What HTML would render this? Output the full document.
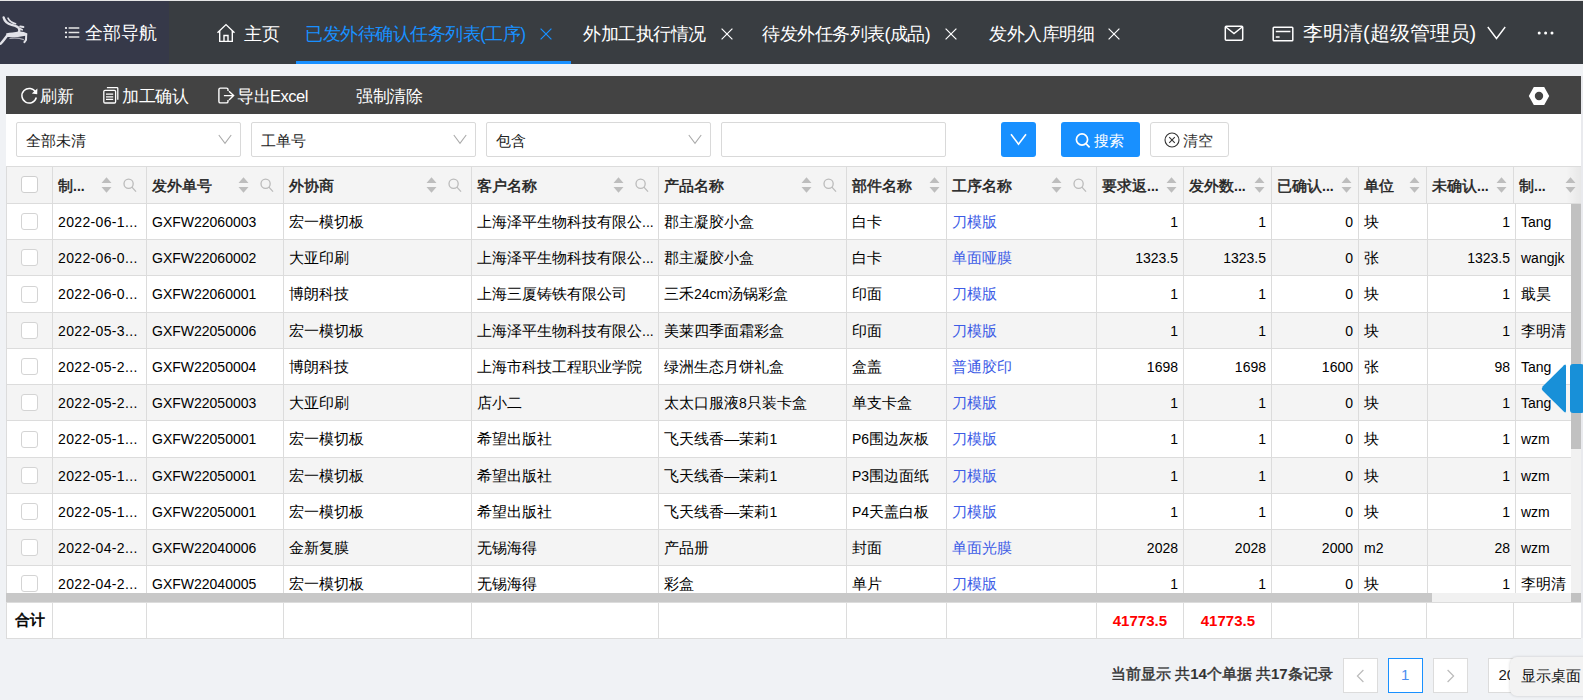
<!DOCTYPE html>
<html><head><meta charset="utf-8">
<style>
*{margin:0;padding:0;box-sizing:border-box}
html,body{width:1583px;height:700px;overflow:hidden;background:#f0f2f5;font-family:"Liberation Sans",sans-serif;color:#222}
.ab{position:absolute}
.t{position:absolute;white-space:nowrap}
.hd{-webkit-text-stroke-width:0.45px}
.hd{font-weight:normal}
</style></head><body>

<div class="ab" style="left:0;top:0;width:1583px;height:1px;background:#e6e6e6"></div>
<div class="ab" style="left:0;top:1px;width:1583px;height:63px;background:#393d41"></div>
<div class="ab" style="left:0;top:1px;width:169px;height:63px;background:#363949"></div>
<svg class="ab" style="left:0;top:12px" width="30" height="36" viewBox="0 0 30 36">
<g fill="none" stroke="#e2e2e8" stroke-linecap="round" stroke-linejoin="round">
<path d="M3.6 5.4 C4.4 8.6 6.6 11.6 11.6 12.8 C15 13.6 17.6 14 18.8 16.2 C19.6 17.8 19.4 19.4 18.6 20.4" stroke-width="2.3"/>
<path d="M8 6.2 C9.2 8.8 11.4 10.8 15.6 11.8" stroke-width="1.6"/>
<path d="M20.2 14.4 L23.4 15" stroke-width="2"/>
<path d="M19.6 16.6 L22.2 17.8" stroke-width="1.6"/>
<path d="M26.2 22.8 L26 28 L24.4 30.2" stroke-width="2"/>
<path d="M7.6 23 C5.4 26 3.2 29 0.6 31.8" stroke-width="2.4"/>
<path d="M10 26.4 C14.4 25.8 19.4 26 23.6 27.6" stroke-width="1.4" stroke="#a8a8b2"/>
</g>
<path d="M6 21.4 C10 20.8 15 20.2 19 19.6 C22 19.4 25 20.4 27.4 21.6 L27 23.6 C24 24 21 24.6 18 25 C14 25.2 10 25.2 7.4 25 Z" fill="#e2e2e8"/>
</svg>
<svg class="ab" style="left:64px;top:26px" width="17" height="13" viewBox="0 0 17 13">
<g fill="#fff"><circle cx="2" cy="2" r="1.1"/><circle cx="2" cy="6.5" r="1.1"/><circle cx="2" cy="11" r="1.1"/></g>
<g stroke="#e6e6e6" stroke-width="1.3"><path d="M4.6 2H15.3M4.6 6.5H15.3M4.6 11H15.3"/></g></svg>
<div class="t" style="left:85px;top:20px;font-size:17.6px;line-height:26px;color:#fff">全部导航</div>
<svg class="ab" style="left:216px;top:23px" width="20" height="20" viewBox="0 0 20 20">
<g fill="none" stroke="#fff" stroke-width="1.4" stroke-linejoin="miter">
<path d="M1.5 9.8 L10 1.6 L18.5 9.8 M3.7 8 V18.4 H16.3 V8 M8 18.4 V12.5 H12 V18.4"/></g></svg>
<div class="t" style="left:244px;top:21px;font-size:17.6px;line-height:26px;color:#fff">主页</div>
<div class="t" style="left:305px;top:21px;font-size:17.6px;line-height:26px;color:#1890ff;letter-spacing:-0.5px">已发外待确认任务列表(工序)</div>
<svg class="ab" style="left:540px;top:28px" width="12" height="12" viewBox="0 0 12 12"><path d="M0.6 0.6 L11.4 11.4 M11.4 0.6 L0.6 11.4" stroke="#1890ff" stroke-width="1.2"/></svg>
<div class="ab" style="left:296px;top:61px;width:275px;height:3px;background:#1890ff"></div>
<div class="t" style="left:583px;top:21px;font-size:17.6px;line-height:26px;color:#ffffff;letter-spacing:-0.5px">外加工执行情况</div>
<svg class="ab" style="left:721px;top:28px" width="12" height="12" viewBox="0 0 12 12"><path d="M0.6 0.6 L11.4 11.4 M11.4 0.6 L0.6 11.4" stroke="#ffffff" stroke-width="1.2"/></svg>
<div class="t" style="left:762px;top:21px;font-size:17.6px;line-height:26px;color:#ffffff;letter-spacing:-0.5px">待发外任务列表(成品)</div>
<svg class="ab" style="left:945px;top:28px" width="12" height="12" viewBox="0 0 12 12"><path d="M0.6 0.6 L11.4 11.4 M11.4 0.6 L0.6 11.4" stroke="#ffffff" stroke-width="1.2"/></svg>
<div class="t" style="left:989px;top:21px;font-size:17.6px;line-height:26px;color:#ffffff;letter-spacing:-0.5px">发外入库明细</div>
<svg class="ab" style="left:1108px;top:28px" width="12" height="12" viewBox="0 0 12 12"><path d="M0.6 0.6 L11.4 11.4 M11.4 0.6 L0.6 11.4" stroke="#ffffff" stroke-width="1.2"/></svg>
<svg class="ab" style="left:1224px;top:25px" width="20" height="17" viewBox="0 0 20 17">
<g fill="none" stroke="#fff" stroke-width="1.5"><rect x="1.3" y="1.3" width="17.4" height="14" rx="1"/><path d="M1.8 2 L10 8.6 L18.2 2"/></g></svg>
<svg class="ab" style="left:1272px;top:26px" width="22" height="16" viewBox="0 0 22 16">
<g fill="none" stroke="#fff" stroke-width="1.5"><rect x="1.2" y="1.2" width="19.6" height="13.6" rx="0.8"/><path d="M3.8 5.6 H18.4 M3.8 10.9 H7.6"/></g></svg>
<div class="t" style="left:1303px;top:20px;font-size:19.8px;line-height:26px;color:#fff">李明清(超级管理员)</div>
<svg class="ab" style="left:1487px;top:26px" width="19" height="14" viewBox="0 0 19 14"><path d="M0.8 1 L9.5 12.5 L18.2 1" fill="none" stroke="#fff" stroke-width="1.4"/></svg>
<svg class="ab" style="left:1536px;top:30px" width="20" height="6" viewBox="0 0 20 6"><g fill="#fff"><circle cx="3.2" cy="3" r="1.5"/><circle cx="9.6" cy="3" r="1.5"/><circle cx="16" cy="3" r="1.5"/></g></svg>
<div class="ab" style="left:6px;top:76px;width:1575px;height:562px;background:#fff"></div>
<div class="ab" style="left:1581px;top:76px;width:2px;height:562px;background:#e9eaee"></div>
<div class="ab" style="left:6px;top:76px;width:1575px;height:38px;background:#434343"></div>
<svg class="ab" style="left:20px;top:85.5px" width="19" height="19" viewBox="0 0 19 19">
<path d="M15.6 6.2 A7.3 7.3 0 1 0 16.3 11.5" fill="none" stroke="#fff" stroke-width="1.5"/>
<path d="M17.4 2.6 L17.2 8.2 L11.8 7.4 Z" fill="#fff"/></svg>
<div class="t" style="left:40px;top:84px;font-size:16.5px;line-height:24px;color:#fff;letter-spacing:-0.5px">刷新</div>
<svg class="ab" style="left:98px;top:82px" width="30" height="26" viewBox="0 0 30 26">
<g fill="none" stroke="#fff" stroke-width="1.3"><rect x="5.8" y="8.4" width="11.8" height="12.6" rx="1.2"/><path d="M8.9 5.7 H19 Q19.8 5.7 19.8 6.5 V17.8"/><path d="M8 12.1 H15.2 M8 14.9 H15.2 M8 17.3 H15.2"/></g></svg>
<div class="t" style="left:122px;top:84px;font-size:16.5px;line-height:24px;color:#fff;letter-spacing:-0.5px">加工确认</div>
<svg class="ab" style="left:212px;top:82px" width="30" height="26" viewBox="0 0 30 26">
<g fill="none" stroke="#fff" stroke-width="1.4"><path d="M16 9 V7.6 Q16 6.1 14.5 6.1 H8.4 Q6.9 6.1 6.9 7.6 V19.4 Q6.9 20.9 8.4 20.9 H14.5 Q16 20.9 16 19.4 V18"/><path d="M11.9 13.6 H21.4 M17 9.3 L21.6 13.6 L17 17.9"/></g></svg>
<div class="t" style="left:237px;top:84px;font-size:16.5px;line-height:24px;color:#fff;letter-spacing:-0.5px">导出Excel</div>
<div class="t" style="left:356px;top:84px;font-size:16.5px;line-height:24px;color:#fff;letter-spacing:-0.5px">强制清除</div>
<svg class="ab" style="left:1528px;top:86px" width="22" height="20" viewBox="0 0 22 20">
<path fill="#fff" fill-rule="evenodd" d="M0.8 10 L5.8 1 H16.2 L21.2 10 L16.2 19 H5.8 Z M11 5.8 A4.2 4.2 0 1 0 11 14.2 A4.2 4.2 0 1 0 11 5.8 Z"/></svg>
<div class="ab" style="left:16px;top:122px;width:225px;height:35px;border:1px solid #d9d9d9;border-radius:2px;background:#fff"></div>
<div class="t" style="left:26px;top:129.5px;font-size:15.4px;line-height:22px;color:#222">全部未清</div>
<svg class="ab" style="left:218px;top:134px" width="14" height="11" viewBox="0 0 14 11"><path d="M0.8 1 L7 9.4 L13.2 1" fill="none" stroke="#aaa" stroke-width="1.1"/></svg>
<div class="ab" style="left:251px;top:122px;width:225px;height:35px;border:1px solid #d9d9d9;border-radius:2px;background:#fff"></div>
<div class="t" style="left:261px;top:129.5px;font-size:15.4px;line-height:22px;color:#222">工单号</div>
<svg class="ab" style="left:453px;top:134px" width="14" height="11" viewBox="0 0 14 11"><path d="M0.8 1 L7 9.4 L13.2 1" fill="none" stroke="#aaa" stroke-width="1.1"/></svg>
<div class="ab" style="left:486px;top:122px;width:225px;height:35px;border:1px solid #d9d9d9;border-radius:2px;background:#fff"></div>
<div class="t" style="left:496px;top:129.5px;font-size:15.4px;line-height:22px;color:#222">包含</div>
<svg class="ab" style="left:688px;top:134px" width="14" height="11" viewBox="0 0 14 11"><path d="M0.8 1 L7 9.4 L13.2 1" fill="none" stroke="#aaa" stroke-width="1.1"/></svg>
<div class="ab" style="left:721px;top:122px;width:225px;height:35px;border:1px solid #d9d9d9;border-radius:2px;background:#fff"></div>
<div class="ab" style="left:1001px;top:122px;width:35px;height:35px;background:#1890ff;border-radius:3px"></div>
<svg class="ab" style="left:1010px;top:133px" width="17" height="13" viewBox="0 0 17 13"><path d="M1 1.2 L8.5 11.2 L16 1.2" fill="none" stroke="#fff" stroke-width="1.6"/></svg>
<div class="ab" style="left:1061px;top:122px;width:79px;height:35px;background:#1890ff;border-radius:3px"></div>
<svg class="ab" style="left:1075px;top:132px" width="16" height="17" viewBox="0 0 16 17"><g fill="none" stroke="#fff" stroke-width="1.7"><circle cx="7" cy="7.5" r="5.6"/><path d="M11 11.6 L14.6 15.4"/></g></svg>
<div class="t" style="left:1094px;top:129.5px;font-size:15.4px;line-height:22px;color:#fff">搜索</div>
<div class="ab" style="left:1150px;top:122px;width:79px;height:35px;border:1px solid #d9d9d9;border-radius:3px;background:#fff"></div>
<svg class="ab" style="left:1164px;top:132px" width="16" height="16" viewBox="0 0 16 16"><g fill="none" stroke="#333" stroke-width="1.1"><circle cx="8" cy="8" r="7"/><path d="M5.2 5.2 L10.8 10.8 M10.8 5.2 L5.2 10.8"/></g></svg>
<div class="t" style="left:1183px;top:129.5px;font-size:15.4px;line-height:22px;color:#333">清空</div>
<div class="ab" style="left:6px;top:166px;width:1575px;height:38px;background:#f4f4f4;border-top:1px solid #dcdcdc;border-bottom:1px solid #dcdcdc;border-left:1px solid #dcdcdc"></div>
<div class="ab" style="left:1566px;top:167px;width:15px;height:36px;background:linear-gradient(90deg,rgba(0,0,0,0),rgba(0,0,0,0.05))"></div>
<div class="ab" style="left:52px;top:167px;width:1px;height:36px;background:#dcdcdc"></div>
<div class="ab" style="left:146px;top:167px;width:1px;height:36px;background:#dcdcdc"></div>
<div class="ab" style="left:283px;top:167px;width:1px;height:36px;background:#dcdcdc"></div>
<div class="ab" style="left:471px;top:167px;width:1px;height:36px;background:#dcdcdc"></div>
<div class="ab" style="left:658px;top:167px;width:1px;height:36px;background:#dcdcdc"></div>
<div class="ab" style="left:846px;top:167px;width:1px;height:36px;background:#dcdcdc"></div>
<div class="ab" style="left:946px;top:167px;width:1px;height:36px;background:#dcdcdc"></div>
<div class="ab" style="left:1096px;top:167px;width:1px;height:36px;background:#dcdcdc"></div>
<div class="ab" style="left:1183px;top:167px;width:1px;height:36px;background:#dcdcdc"></div>
<div class="ab" style="left:1271px;top:167px;width:1px;height:36px;background:#dcdcdc"></div>
<div class="ab" style="left:1358px;top:167px;width:1px;height:36px;background:#dcdcdc"></div>
<div class="ab" style="left:1426px;top:167px;width:1px;height:36px;background:#dcdcdc"></div>
<div class="ab" style="left:1513px;top:167px;width:1px;height:36px;background:#dcdcdc"></div>
<div class="t hd" style="left:58px;top:174px;font-size:15px;line-height:24px;color:#222">制<span style="font-size:14px;-webkit-text-stroke-width:0;font-weight:bold">...</span></div>
<svg class="ab" style="left:101px;top:176px" width="11" height="17" viewBox="0 0 11 17"><path d="M0.5 7 L5.5 1.2 L10.5 7 Z M0.5 11 L10.5 11 L5.5 16.8 Z" fill="#bdbdbd"/></svg>
<svg class="ab" style="left:123px;top:177px" width="14" height="16" viewBox="0 0 14 16"><g fill="none" stroke="#bbb" stroke-width="1.3"><circle cx="5.6" cy="6.7" r="4.6"/><path d="M8.9 10.1 L13 14.6"/></g></svg>
<div class="t hd" style="left:152px;top:174px;font-size:15px;line-height:24px;color:#222">发外单号</div>
<svg class="ab" style="left:238px;top:176px" width="11" height="17" viewBox="0 0 11 17"><path d="M0.5 7 L5.5 1.2 L10.5 7 Z M0.5 11 L10.5 11 L5.5 16.8 Z" fill="#bdbdbd"/></svg>
<svg class="ab" style="left:260px;top:177px" width="14" height="16" viewBox="0 0 14 16"><g fill="none" stroke="#bbb" stroke-width="1.3"><circle cx="5.6" cy="6.7" r="4.6"/><path d="M8.9 10.1 L13 14.6"/></g></svg>
<div class="t hd" style="left:289px;top:174px;font-size:15px;line-height:24px;color:#222">外协商</div>
<svg class="ab" style="left:426px;top:176px" width="11" height="17" viewBox="0 0 11 17"><path d="M0.5 7 L5.5 1.2 L10.5 7 Z M0.5 11 L10.5 11 L5.5 16.8 Z" fill="#bdbdbd"/></svg>
<svg class="ab" style="left:448px;top:177px" width="14" height="16" viewBox="0 0 14 16"><g fill="none" stroke="#bbb" stroke-width="1.3"><circle cx="5.6" cy="6.7" r="4.6"/><path d="M8.9 10.1 L13 14.6"/></g></svg>
<div class="t hd" style="left:477px;top:174px;font-size:15px;line-height:24px;color:#222">客户名称</div>
<svg class="ab" style="left:613px;top:176px" width="11" height="17" viewBox="0 0 11 17"><path d="M0.5 7 L5.5 1.2 L10.5 7 Z M0.5 11 L10.5 11 L5.5 16.8 Z" fill="#bdbdbd"/></svg>
<svg class="ab" style="left:635px;top:177px" width="14" height="16" viewBox="0 0 14 16"><g fill="none" stroke="#bbb" stroke-width="1.3"><circle cx="5.6" cy="6.7" r="4.6"/><path d="M8.9 10.1 L13 14.6"/></g></svg>
<div class="t hd" style="left:664px;top:174px;font-size:15px;line-height:24px;color:#222">产品名称</div>
<svg class="ab" style="left:801px;top:176px" width="11" height="17" viewBox="0 0 11 17"><path d="M0.5 7 L5.5 1.2 L10.5 7 Z M0.5 11 L10.5 11 L5.5 16.8 Z" fill="#bdbdbd"/></svg>
<svg class="ab" style="left:823px;top:177px" width="14" height="16" viewBox="0 0 14 16"><g fill="none" stroke="#bbb" stroke-width="1.3"><circle cx="5.6" cy="6.7" r="4.6"/><path d="M8.9 10.1 L13 14.6"/></g></svg>
<div class="t hd" style="left:852px;top:174px;font-size:15px;line-height:24px;color:#222">部件名称</div>
<svg class="ab" style="left:929px;top:176px" width="11" height="17" viewBox="0 0 11 17"><path d="M0.5 7 L5.5 1.2 L10.5 7 Z M0.5 11 L10.5 11 L5.5 16.8 Z" fill="#bdbdbd"/></svg>
<div class="t hd" style="left:952px;top:174px;font-size:15px;line-height:24px;color:#222">工序名称</div>
<svg class="ab" style="left:1051px;top:176px" width="11" height="17" viewBox="0 0 11 17"><path d="M0.5 7 L5.5 1.2 L10.5 7 Z M0.5 11 L10.5 11 L5.5 16.8 Z" fill="#bdbdbd"/></svg>
<svg class="ab" style="left:1073px;top:177px" width="14" height="16" viewBox="0 0 14 16"><g fill="none" stroke="#bbb" stroke-width="1.3"><circle cx="5.6" cy="6.7" r="4.6"/><path d="M8.9 10.1 L13 14.6"/></g></svg>
<div class="t hd" style="left:1102px;top:174px;font-size:15px;line-height:24px;color:#222">要求返<span style="font-size:14px;-webkit-text-stroke-width:0;font-weight:bold">...</span></div>
<svg class="ab" style="left:1166px;top:176px" width="11" height="17" viewBox="0 0 11 17"><path d="M0.5 7 L5.5 1.2 L10.5 7 Z M0.5 11 L10.5 11 L5.5 16.8 Z" fill="#bdbdbd"/></svg>
<div class="t hd" style="left:1189px;top:174px;font-size:15px;line-height:24px;color:#222">发外数<span style="font-size:14px;-webkit-text-stroke-width:0;font-weight:bold">...</span></div>
<svg class="ab" style="left:1254px;top:176px" width="11" height="17" viewBox="0 0 11 17"><path d="M0.5 7 L5.5 1.2 L10.5 7 Z M0.5 11 L10.5 11 L5.5 16.8 Z" fill="#bdbdbd"/></svg>
<div class="t hd" style="left:1277px;top:174px;font-size:15px;line-height:24px;color:#222">已确认<span style="font-size:14px;-webkit-text-stroke-width:0;font-weight:bold">...</span></div>
<svg class="ab" style="left:1341px;top:176px" width="11" height="17" viewBox="0 0 11 17"><path d="M0.5 7 L5.5 1.2 L10.5 7 Z M0.5 11 L10.5 11 L5.5 16.8 Z" fill="#bdbdbd"/></svg>
<div class="t hd" style="left:1364px;top:174px;font-size:15px;line-height:24px;color:#222">单位</div>
<svg class="ab" style="left:1409px;top:176px" width="11" height="17" viewBox="0 0 11 17"><path d="M0.5 7 L5.5 1.2 L10.5 7 Z M0.5 11 L10.5 11 L5.5 16.8 Z" fill="#bdbdbd"/></svg>
<div class="t hd" style="left:1432px;top:174px;font-size:15px;line-height:24px;color:#222">未确认<span style="font-size:14px;-webkit-text-stroke-width:0;font-weight:bold">...</span></div>
<svg class="ab" style="left:1496px;top:176px" width="11" height="17" viewBox="0 0 11 17"><path d="M0.5 7 L5.5 1.2 L10.5 7 Z M0.5 11 L10.5 11 L5.5 16.8 Z" fill="#bdbdbd"/></svg>
<div class="t hd" style="left:1519px;top:174px;font-size:15px;line-height:24px;color:#222">制<span style="font-size:14px;-webkit-text-stroke-width:0;font-weight:bold">...</span></div>
<svg class="ab" style="left:1565px;top:176px" width="11" height="17" viewBox="0 0 11 17"><path d="M0.5 7 L5.5 1.2 L10.5 7 Z M0.5 11 L10.5 11 L5.5 16.8 Z" fill="#bdbdbd"/></svg>
<div class="ab" style="left:21px;top:176px;width:17px;height:17px;border:1px solid #cfcfcf;border-radius:3px;background:#fff"></div>
<div class="ab" style="left:6px;top:204px;width:1565px;height:389px;overflow:hidden;background:#fff">
<div class="ab" style="left:1px;top:0px;width:1575px;height:36px;background:#fff;border-bottom:1px solid #dcdcdc"></div>
<div class="ab" style="left:15px;top:9.0px;width:17px;height:17px;border:1px solid #d4d4d4;border-radius:3px;background:#fff"></div>
<div class="t" style="left:52px;top:5.5px;font-size:15.4px;line-height:24px;color:#000;letter-spacing:0.35px"><span style="font-size:14px;-webkit-text-stroke-width:0">2022-06-1...</span></div>
<div class="t" style="left:146px;top:5.5px;font-size:15.4px;line-height:24px;color:#000"><span style="font-size:14px;-webkit-text-stroke-width:0">GXFW22060003</span></div>
<div class="t" style="left:283px;top:5.5px;font-size:15.4px;line-height:24px;color:#000">宏一模切板</div>
<div class="t" style="left:471px;top:5.5px;font-size:15.4px;line-height:24px;color:#000">上海泽平生物科技有限公<span style="font-size:14px;-webkit-text-stroke-width:0">...</span></div>
<div class="t" style="left:658px;top:5.5px;font-size:15.4px;line-height:24px;color:#000">郡主凝胶小盒</div>
<div class="t" style="left:846px;top:5.5px;font-size:15.4px;line-height:24px;color:#000">白卡</div>
<div class="t" style="left:946px;top:5.5px;font-size:15.4px;line-height:24px;color:#3d5ce6">刀模版</div>
<div class="t" style="right:393px;top:5.5px;font-size:14px;line-height:24px;color:#000;-webkit-text-stroke-width:0">1</div>
<div class="t" style="right:305px;top:5.5px;font-size:14px;line-height:24px;color:#000;-webkit-text-stroke-width:0">1</div>
<div class="t" style="right:218px;top:5.5px;font-size:14px;line-height:24px;color:#000;-webkit-text-stroke-width:0">0</div>
<div class="t" style="left:1358px;top:5.5px;font-size:15.4px;line-height:24px;color:#000">块</div>
<div class="t" style="right:61px;top:5.5px;font-size:14px;line-height:24px;color:#000;-webkit-text-stroke-width:0">1</div>
<div class="t" style="left:1515px;top:5.5px;font-size:15.4px;line-height:24px;color:#000"><span style="font-size:14px;-webkit-text-stroke-width:0">Tang</span></div>
<div class="ab" style="left:1px;top:36px;width:1575px;height:36px;background:#f4f4f4;border-bottom:1px solid #dcdcdc"></div>
<div class="ab" style="left:15px;top:45.0px;width:17px;height:17px;border:1px solid #d4d4d4;border-radius:3px;background:#fff"></div>
<div class="t" style="left:52px;top:41.5px;font-size:15.4px;line-height:24px;color:#000;letter-spacing:0.35px"><span style="font-size:14px;-webkit-text-stroke-width:0">2022-06-0...</span></div>
<div class="t" style="left:146px;top:41.5px;font-size:15.4px;line-height:24px;color:#000"><span style="font-size:14px;-webkit-text-stroke-width:0">GXFW22060002</span></div>
<div class="t" style="left:283px;top:41.5px;font-size:15.4px;line-height:24px;color:#000">大亚印刷</div>
<div class="t" style="left:471px;top:41.5px;font-size:15.4px;line-height:24px;color:#000">上海泽平生物科技有限公<span style="font-size:14px;-webkit-text-stroke-width:0">...</span></div>
<div class="t" style="left:658px;top:41.5px;font-size:15.4px;line-height:24px;color:#000">郡主凝胶小盒</div>
<div class="t" style="left:846px;top:41.5px;font-size:15.4px;line-height:24px;color:#000">白卡</div>
<div class="t" style="left:946px;top:41.5px;font-size:15.4px;line-height:24px;color:#3d5ce6">单面哑膜</div>
<div class="t" style="right:393px;top:41.5px;font-size:14px;line-height:24px;color:#000;-webkit-text-stroke-width:0">1323.5</div>
<div class="t" style="right:305px;top:41.5px;font-size:14px;line-height:24px;color:#000;-webkit-text-stroke-width:0">1323.5</div>
<div class="t" style="right:218px;top:41.5px;font-size:14px;line-height:24px;color:#000;-webkit-text-stroke-width:0">0</div>
<div class="t" style="left:1358px;top:41.5px;font-size:15.4px;line-height:24px;color:#000">张</div>
<div class="t" style="right:61px;top:41.5px;font-size:14px;line-height:24px;color:#000;-webkit-text-stroke-width:0">1323.5</div>
<div class="t" style="left:1515px;top:41.5px;font-size:15.4px;line-height:24px;color:#000"><span style="font-size:14px;-webkit-text-stroke-width:0">wangjk</span></div>
<div class="ab" style="left:1px;top:72px;width:1575px;height:37px;background:#fff;border-bottom:1px solid #dcdcdc"></div>
<div class="ab" style="left:15px;top:81.5px;width:17px;height:17px;border:1px solid #d4d4d4;border-radius:3px;background:#fff"></div>
<div class="t" style="left:52px;top:78.0px;font-size:15.4px;line-height:24px;color:#000;letter-spacing:0.35px"><span style="font-size:14px;-webkit-text-stroke-width:0">2022-06-0...</span></div>
<div class="t" style="left:146px;top:78.0px;font-size:15.4px;line-height:24px;color:#000"><span style="font-size:14px;-webkit-text-stroke-width:0">GXFW22060001</span></div>
<div class="t" style="left:283px;top:78.0px;font-size:15.4px;line-height:24px;color:#000">博朗科技</div>
<div class="t" style="left:471px;top:78.0px;font-size:15.4px;line-height:24px;color:#000">上海三厦铸铁有限公司</div>
<div class="t" style="left:658px;top:78.0px;font-size:15.4px;line-height:24px;color:#000">三禾<span style="font-size:14px;-webkit-text-stroke-width:0">24cm</span>汤锅彩盒</div>
<div class="t" style="left:846px;top:78.0px;font-size:15.4px;line-height:24px;color:#000">印面</div>
<div class="t" style="left:946px;top:78.0px;font-size:15.4px;line-height:24px;color:#3d5ce6">刀模版</div>
<div class="t" style="right:393px;top:78.0px;font-size:14px;line-height:24px;color:#000;-webkit-text-stroke-width:0">1</div>
<div class="t" style="right:305px;top:78.0px;font-size:14px;line-height:24px;color:#000;-webkit-text-stroke-width:0">1</div>
<div class="t" style="right:218px;top:78.0px;font-size:14px;line-height:24px;color:#000;-webkit-text-stroke-width:0">0</div>
<div class="t" style="left:1358px;top:78.0px;font-size:15.4px;line-height:24px;color:#000">块</div>
<div class="t" style="right:61px;top:78.0px;font-size:14px;line-height:24px;color:#000;-webkit-text-stroke-width:0">1</div>
<div class="t" style="left:1515px;top:78.0px;font-size:15.4px;line-height:24px;color:#000">戢昊</div>
<div class="ab" style="left:1px;top:109px;width:1575px;height:36px;background:#f4f4f4;border-bottom:1px solid #dcdcdc"></div>
<div class="ab" style="left:15px;top:118.0px;width:17px;height:17px;border:1px solid #d4d4d4;border-radius:3px;background:#fff"></div>
<div class="t" style="left:52px;top:114.5px;font-size:15.4px;line-height:24px;color:#000;letter-spacing:0.35px"><span style="font-size:14px;-webkit-text-stroke-width:0">2022-05-3...</span></div>
<div class="t" style="left:146px;top:114.5px;font-size:15.4px;line-height:24px;color:#000"><span style="font-size:14px;-webkit-text-stroke-width:0">GXFW22050006</span></div>
<div class="t" style="left:283px;top:114.5px;font-size:15.4px;line-height:24px;color:#000">宏一模切板</div>
<div class="t" style="left:471px;top:114.5px;font-size:15.4px;line-height:24px;color:#000">上海泽平生物科技有限公<span style="font-size:14px;-webkit-text-stroke-width:0">...</span></div>
<div class="t" style="left:658px;top:114.5px;font-size:15.4px;line-height:24px;color:#000">美莱四季面霜彩盒</div>
<div class="t" style="left:846px;top:114.5px;font-size:15.4px;line-height:24px;color:#000">印面</div>
<div class="t" style="left:946px;top:114.5px;font-size:15.4px;line-height:24px;color:#3d5ce6">刀模版</div>
<div class="t" style="right:393px;top:114.5px;font-size:14px;line-height:24px;color:#000;-webkit-text-stroke-width:0">1</div>
<div class="t" style="right:305px;top:114.5px;font-size:14px;line-height:24px;color:#000;-webkit-text-stroke-width:0">1</div>
<div class="t" style="right:218px;top:114.5px;font-size:14px;line-height:24px;color:#000;-webkit-text-stroke-width:0">0</div>
<div class="t" style="left:1358px;top:114.5px;font-size:15.4px;line-height:24px;color:#000">块</div>
<div class="t" style="right:61px;top:114.5px;font-size:14px;line-height:24px;color:#000;-webkit-text-stroke-width:0">1</div>
<div class="t" style="left:1515px;top:114.5px;font-size:15.4px;line-height:24px;color:#000">李明清</div>
<div class="ab" style="left:1px;top:145px;width:1575px;height:36px;background:#fff;border-bottom:1px solid #dcdcdc"></div>
<div class="ab" style="left:15px;top:154.0px;width:17px;height:17px;border:1px solid #d4d4d4;border-radius:3px;background:#fff"></div>
<div class="t" style="left:52px;top:150.5px;font-size:15.4px;line-height:24px;color:#000;letter-spacing:0.35px"><span style="font-size:14px;-webkit-text-stroke-width:0">2022-05-2...</span></div>
<div class="t" style="left:146px;top:150.5px;font-size:15.4px;line-height:24px;color:#000"><span style="font-size:14px;-webkit-text-stroke-width:0">GXFW22050004</span></div>
<div class="t" style="left:283px;top:150.5px;font-size:15.4px;line-height:24px;color:#000">博朗科技</div>
<div class="t" style="left:471px;top:150.5px;font-size:15.4px;line-height:24px;color:#000">上海市科技工程职业学院</div>
<div class="t" style="left:658px;top:150.5px;font-size:15.4px;line-height:24px;color:#000">绿洲生态月饼礼盒</div>
<div class="t" style="left:846px;top:150.5px;font-size:15.4px;line-height:24px;color:#000">盒盖</div>
<div class="t" style="left:946px;top:150.5px;font-size:15.4px;line-height:24px;color:#3d5ce6">普通胶印</div>
<div class="t" style="right:393px;top:150.5px;font-size:14px;line-height:24px;color:#000;-webkit-text-stroke-width:0">1698</div>
<div class="t" style="right:305px;top:150.5px;font-size:14px;line-height:24px;color:#000;-webkit-text-stroke-width:0">1698</div>
<div class="t" style="right:218px;top:150.5px;font-size:14px;line-height:24px;color:#000;-webkit-text-stroke-width:0">1600</div>
<div class="t" style="left:1358px;top:150.5px;font-size:15.4px;line-height:24px;color:#000">张</div>
<div class="t" style="right:61px;top:150.5px;font-size:14px;line-height:24px;color:#000;-webkit-text-stroke-width:0">98</div>
<div class="t" style="left:1515px;top:150.5px;font-size:15.4px;line-height:24px;color:#000"><span style="font-size:14px;-webkit-text-stroke-width:0">Tang</span></div>
<div class="ab" style="left:1px;top:181px;width:1575px;height:36px;background:#f4f4f4;border-bottom:1px solid #dcdcdc"></div>
<div class="ab" style="left:15px;top:190.0px;width:17px;height:17px;border:1px solid #d4d4d4;border-radius:3px;background:#fff"></div>
<div class="t" style="left:52px;top:186.5px;font-size:15.4px;line-height:24px;color:#000;letter-spacing:0.35px"><span style="font-size:14px;-webkit-text-stroke-width:0">2022-05-2...</span></div>
<div class="t" style="left:146px;top:186.5px;font-size:15.4px;line-height:24px;color:#000"><span style="font-size:14px;-webkit-text-stroke-width:0">GXFW22050003</span></div>
<div class="t" style="left:283px;top:186.5px;font-size:15.4px;line-height:24px;color:#000">大亚印刷</div>
<div class="t" style="left:471px;top:186.5px;font-size:15.4px;line-height:24px;color:#000">店小二</div>
<div class="t" style="left:658px;top:186.5px;font-size:15.4px;line-height:24px;color:#000">太太口服液<span style="font-size:14px;-webkit-text-stroke-width:0">8</span>只装卡盒</div>
<div class="t" style="left:846px;top:186.5px;font-size:15.4px;line-height:24px;color:#000">单支卡盒</div>
<div class="t" style="left:946px;top:186.5px;font-size:15.4px;line-height:24px;color:#3d5ce6">刀模版</div>
<div class="t" style="right:393px;top:186.5px;font-size:14px;line-height:24px;color:#000;-webkit-text-stroke-width:0">1</div>
<div class="t" style="right:305px;top:186.5px;font-size:14px;line-height:24px;color:#000;-webkit-text-stroke-width:0">1</div>
<div class="t" style="right:218px;top:186.5px;font-size:14px;line-height:24px;color:#000;-webkit-text-stroke-width:0">0</div>
<div class="t" style="left:1358px;top:186.5px;font-size:15.4px;line-height:24px;color:#000">块</div>
<div class="t" style="right:61px;top:186.5px;font-size:14px;line-height:24px;color:#000;-webkit-text-stroke-width:0">1</div>
<div class="t" style="left:1515px;top:186.5px;font-size:15.4px;line-height:24px;color:#000"><span style="font-size:14px;-webkit-text-stroke-width:0">Tang</span></div>
<div class="ab" style="left:1px;top:217px;width:1575px;height:37px;background:#fff;border-bottom:1px solid #dcdcdc"></div>
<div class="ab" style="left:15px;top:226.5px;width:17px;height:17px;border:1px solid #d4d4d4;border-radius:3px;background:#fff"></div>
<div class="t" style="left:52px;top:223.0px;font-size:15.4px;line-height:24px;color:#000;letter-spacing:0.35px"><span style="font-size:14px;-webkit-text-stroke-width:0">2022-05-1...</span></div>
<div class="t" style="left:146px;top:223.0px;font-size:15.4px;line-height:24px;color:#000"><span style="font-size:14px;-webkit-text-stroke-width:0">GXFW22050001</span></div>
<div class="t" style="left:283px;top:223.0px;font-size:15.4px;line-height:24px;color:#000">宏一模切板</div>
<div class="t" style="left:471px;top:223.0px;font-size:15.4px;line-height:24px;color:#000">希望出版社</div>
<div class="t" style="left:658px;top:223.0px;font-size:15.4px;line-height:24px;color:#000">飞天线香—茉莉<span style="font-size:14px;-webkit-text-stroke-width:0">1</span></div>
<div class="t" style="left:846px;top:223.0px;font-size:15.4px;line-height:24px;color:#000"><span style="font-size:14px;-webkit-text-stroke-width:0">P6</span>围边灰板</div>
<div class="t" style="left:946px;top:223.0px;font-size:15.4px;line-height:24px;color:#3d5ce6">刀模版</div>
<div class="t" style="right:393px;top:223.0px;font-size:14px;line-height:24px;color:#000;-webkit-text-stroke-width:0">1</div>
<div class="t" style="right:305px;top:223.0px;font-size:14px;line-height:24px;color:#000;-webkit-text-stroke-width:0">1</div>
<div class="t" style="right:218px;top:223.0px;font-size:14px;line-height:24px;color:#000;-webkit-text-stroke-width:0">0</div>
<div class="t" style="left:1358px;top:223.0px;font-size:15.4px;line-height:24px;color:#000">块</div>
<div class="t" style="right:61px;top:223.0px;font-size:14px;line-height:24px;color:#000;-webkit-text-stroke-width:0">1</div>
<div class="t" style="left:1515px;top:223.0px;font-size:15.4px;line-height:24px;color:#000"><span style="font-size:14px;-webkit-text-stroke-width:0">wzm</span></div>
<div class="ab" style="left:1px;top:254px;width:1575px;height:36px;background:#f4f4f4;border-bottom:1px solid #dcdcdc"></div>
<div class="ab" style="left:15px;top:263.0px;width:17px;height:17px;border:1px solid #d4d4d4;border-radius:3px;background:#fff"></div>
<div class="t" style="left:52px;top:259.5px;font-size:15.4px;line-height:24px;color:#000;letter-spacing:0.35px"><span style="font-size:14px;-webkit-text-stroke-width:0">2022-05-1...</span></div>
<div class="t" style="left:146px;top:259.5px;font-size:15.4px;line-height:24px;color:#000"><span style="font-size:14px;-webkit-text-stroke-width:0">GXFW22050001</span></div>
<div class="t" style="left:283px;top:259.5px;font-size:15.4px;line-height:24px;color:#000">宏一模切板</div>
<div class="t" style="left:471px;top:259.5px;font-size:15.4px;line-height:24px;color:#000">希望出版社</div>
<div class="t" style="left:658px;top:259.5px;font-size:15.4px;line-height:24px;color:#000">飞天线香—茉莉<span style="font-size:14px;-webkit-text-stroke-width:0">1</span></div>
<div class="t" style="left:846px;top:259.5px;font-size:15.4px;line-height:24px;color:#000"><span style="font-size:14px;-webkit-text-stroke-width:0">P3</span>围边面纸</div>
<div class="t" style="left:946px;top:259.5px;font-size:15.4px;line-height:24px;color:#3d5ce6">刀模版</div>
<div class="t" style="right:393px;top:259.5px;font-size:14px;line-height:24px;color:#000;-webkit-text-stroke-width:0">1</div>
<div class="t" style="right:305px;top:259.5px;font-size:14px;line-height:24px;color:#000;-webkit-text-stroke-width:0">1</div>
<div class="t" style="right:218px;top:259.5px;font-size:14px;line-height:24px;color:#000;-webkit-text-stroke-width:0">0</div>
<div class="t" style="left:1358px;top:259.5px;font-size:15.4px;line-height:24px;color:#000">块</div>
<div class="t" style="right:61px;top:259.5px;font-size:14px;line-height:24px;color:#000;-webkit-text-stroke-width:0">1</div>
<div class="t" style="left:1515px;top:259.5px;font-size:15.4px;line-height:24px;color:#000"><span style="font-size:14px;-webkit-text-stroke-width:0">wzm</span></div>
<div class="ab" style="left:1px;top:290px;width:1575px;height:36px;background:#fff;border-bottom:1px solid #dcdcdc"></div>
<div class="ab" style="left:15px;top:299.0px;width:17px;height:17px;border:1px solid #d4d4d4;border-radius:3px;background:#fff"></div>
<div class="t" style="left:52px;top:295.5px;font-size:15.4px;line-height:24px;color:#000;letter-spacing:0.35px"><span style="font-size:14px;-webkit-text-stroke-width:0">2022-05-1...</span></div>
<div class="t" style="left:146px;top:295.5px;font-size:15.4px;line-height:24px;color:#000"><span style="font-size:14px;-webkit-text-stroke-width:0">GXFW22050001</span></div>
<div class="t" style="left:283px;top:295.5px;font-size:15.4px;line-height:24px;color:#000">宏一模切板</div>
<div class="t" style="left:471px;top:295.5px;font-size:15.4px;line-height:24px;color:#000">希望出版社</div>
<div class="t" style="left:658px;top:295.5px;font-size:15.4px;line-height:24px;color:#000">飞天线香—茉莉<span style="font-size:14px;-webkit-text-stroke-width:0">1</span></div>
<div class="t" style="left:846px;top:295.5px;font-size:15.4px;line-height:24px;color:#000"><span style="font-size:14px;-webkit-text-stroke-width:0">P4</span>天盖白板</div>
<div class="t" style="left:946px;top:295.5px;font-size:15.4px;line-height:24px;color:#3d5ce6">刀模版</div>
<div class="t" style="right:393px;top:295.5px;font-size:14px;line-height:24px;color:#000;-webkit-text-stroke-width:0">1</div>
<div class="t" style="right:305px;top:295.5px;font-size:14px;line-height:24px;color:#000;-webkit-text-stroke-width:0">1</div>
<div class="t" style="right:218px;top:295.5px;font-size:14px;line-height:24px;color:#000;-webkit-text-stroke-width:0">0</div>
<div class="t" style="left:1358px;top:295.5px;font-size:15.4px;line-height:24px;color:#000">块</div>
<div class="t" style="right:61px;top:295.5px;font-size:14px;line-height:24px;color:#000;-webkit-text-stroke-width:0">1</div>
<div class="t" style="left:1515px;top:295.5px;font-size:15.4px;line-height:24px;color:#000"><span style="font-size:14px;-webkit-text-stroke-width:0">wzm</span></div>
<div class="ab" style="left:1px;top:326px;width:1575px;height:36px;background:#f4f4f4;border-bottom:1px solid #dcdcdc"></div>
<div class="ab" style="left:15px;top:335.0px;width:17px;height:17px;border:1px solid #d4d4d4;border-radius:3px;background:#fff"></div>
<div class="t" style="left:52px;top:331.5px;font-size:15.4px;line-height:24px;color:#000;letter-spacing:0.35px"><span style="font-size:14px;-webkit-text-stroke-width:0">2022-04-2...</span></div>
<div class="t" style="left:146px;top:331.5px;font-size:15.4px;line-height:24px;color:#000"><span style="font-size:14px;-webkit-text-stroke-width:0">GXFW22040006</span></div>
<div class="t" style="left:283px;top:331.5px;font-size:15.4px;line-height:24px;color:#000">金新复膜</div>
<div class="t" style="left:471px;top:331.5px;font-size:15.4px;line-height:24px;color:#000">无锡海得</div>
<div class="t" style="left:658px;top:331.5px;font-size:15.4px;line-height:24px;color:#000">产品册</div>
<div class="t" style="left:846px;top:331.5px;font-size:15.4px;line-height:24px;color:#000">封面</div>
<div class="t" style="left:946px;top:331.5px;font-size:15.4px;line-height:24px;color:#3d5ce6">单面光膜</div>
<div class="t" style="right:393px;top:331.5px;font-size:14px;line-height:24px;color:#000;-webkit-text-stroke-width:0">2028</div>
<div class="t" style="right:305px;top:331.5px;font-size:14px;line-height:24px;color:#000;-webkit-text-stroke-width:0">2028</div>
<div class="t" style="right:218px;top:331.5px;font-size:14px;line-height:24px;color:#000;-webkit-text-stroke-width:0">2000</div>
<div class="t" style="left:1358px;top:331.5px;font-size:15.4px;line-height:24px;color:#000"><span style="font-size:14px;-webkit-text-stroke-width:0">m2</span></div>
<div class="t" style="right:61px;top:331.5px;font-size:14px;line-height:24px;color:#000;-webkit-text-stroke-width:0">28</div>
<div class="t" style="left:1515px;top:331.5px;font-size:15.4px;line-height:24px;color:#000"><span style="font-size:14px;-webkit-text-stroke-width:0">wzm</span></div>
<div class="ab" style="left:1px;top:362px;width:1575px;height:36px;background:#fff;border-bottom:1px solid #dcdcdc"></div>
<div class="ab" style="left:15px;top:371.0px;width:17px;height:17px;border:1px solid #d4d4d4;border-radius:3px;background:#fff"></div>
<div class="t" style="left:52px;top:367.5px;font-size:15.4px;line-height:24px;color:#000;letter-spacing:0.35px"><span style="font-size:14px;-webkit-text-stroke-width:0">2022-04-2...</span></div>
<div class="t" style="left:146px;top:367.5px;font-size:15.4px;line-height:24px;color:#000"><span style="font-size:14px;-webkit-text-stroke-width:0">GXFW22040005</span></div>
<div class="t" style="left:283px;top:367.5px;font-size:15.4px;line-height:24px;color:#000">宏一模切板</div>
<div class="t" style="left:471px;top:367.5px;font-size:15.4px;line-height:24px;color:#000">无锡海得</div>
<div class="t" style="left:658px;top:367.5px;font-size:15.4px;line-height:24px;color:#000">彩盒</div>
<div class="t" style="left:846px;top:367.5px;font-size:15.4px;line-height:24px;color:#000">单片</div>
<div class="t" style="left:946px;top:367.5px;font-size:15.4px;line-height:24px;color:#3d5ce6">刀模版</div>
<div class="t" style="right:393px;top:367.5px;font-size:14px;line-height:24px;color:#000;-webkit-text-stroke-width:0">1</div>
<div class="t" style="right:305px;top:367.5px;font-size:14px;line-height:24px;color:#000;-webkit-text-stroke-width:0">1</div>
<div class="t" style="right:218px;top:367.5px;font-size:14px;line-height:24px;color:#000;-webkit-text-stroke-width:0">0</div>
<div class="t" style="left:1358px;top:367.5px;font-size:15.4px;line-height:24px;color:#000">块</div>
<div class="t" style="right:61px;top:367.5px;font-size:14px;line-height:24px;color:#000;-webkit-text-stroke-width:0">1</div>
<div class="t" style="left:1515px;top:367.5px;font-size:15.4px;line-height:24px;color:#000">李明清</div>
<div class="ab" style="left:46px;top:0;width:1px;height:389px;background:#dcdcdc"></div>
<div class="ab" style="left:140px;top:0;width:1px;height:389px;background:#dcdcdc"></div>
<div class="ab" style="left:277px;top:0;width:1px;height:389px;background:#dcdcdc"></div>
<div class="ab" style="left:465px;top:0;width:1px;height:389px;background:#dcdcdc"></div>
<div class="ab" style="left:652px;top:0;width:1px;height:389px;background:#dcdcdc"></div>
<div class="ab" style="left:840px;top:0;width:1px;height:389px;background:#dcdcdc"></div>
<div class="ab" style="left:940px;top:0;width:1px;height:389px;background:#dcdcdc"></div>
<div class="ab" style="left:1090px;top:0;width:1px;height:389px;background:#dcdcdc"></div>
<div class="ab" style="left:1177px;top:0;width:1px;height:389px;background:#dcdcdc"></div>
<div class="ab" style="left:1265px;top:0;width:1px;height:389px;background:#dcdcdc"></div>
<div class="ab" style="left:1352px;top:0;width:1px;height:389px;background:#dcdcdc"></div>
<div class="ab" style="left:1421px;top:0;width:1px;height:389px;background:#dcdcdc"></div>
<div class="ab" style="left:1509px;top:0;width:1px;height:389px;background:#dcdcdc"></div>
<div class="ab" style="left:0;top:0;width:1px;height:389px;background:#dcdcdc"></div>
</div>
<div class="ab" style="left:1571px;top:204px;width:10px;height:389px;background:#f1f1f1"></div>
<div class="ab" style="left:1571px;top:204px;width:10px;height:245px;background:#c1c1c1"></div>
<div class="ab" style="left:6px;top:593px;width:1565px;height:9px;background:#f1f1f1"></div>
<div class="ab" style="left:6px;top:593px;width:1426px;height:9px;background:#c8c8c8"></div>
<div class="ab" style="left:1571px;top:593px;width:10px;height:9px;background:#c1c1c1"></div>
<div class="ab" style="left:6px;top:602px;width:1575px;height:37px;background:#fff;border-left:1px solid #dcdcdc;border-bottom:1px solid #dcdcdc;border-top:1px solid #dcdcdc"></div>
<div class="ab" style="left:52px;top:602px;width:1px;height:36px;background:#dcdcdc"></div>
<div class="ab" style="left:146px;top:602px;width:1px;height:36px;background:#dcdcdc"></div>
<div class="ab" style="left:283px;top:602px;width:1px;height:36px;background:#dcdcdc"></div>
<div class="ab" style="left:471px;top:602px;width:1px;height:36px;background:#dcdcdc"></div>
<div class="ab" style="left:658px;top:602px;width:1px;height:36px;background:#dcdcdc"></div>
<div class="ab" style="left:846px;top:602px;width:1px;height:36px;background:#dcdcdc"></div>
<div class="ab" style="left:946px;top:602px;width:1px;height:36px;background:#dcdcdc"></div>
<div class="ab" style="left:1096px;top:602px;width:1px;height:36px;background:#dcdcdc"></div>
<div class="ab" style="left:1183px;top:602px;width:1px;height:36px;background:#dcdcdc"></div>
<div class="ab" style="left:1271px;top:602px;width:1px;height:36px;background:#dcdcdc"></div>
<div class="ab" style="left:1358px;top:602px;width:1px;height:36px;background:#dcdcdc"></div>
<div class="ab" style="left:1426px;top:602px;width:1px;height:36px;background:#dcdcdc"></div>
<div class="ab" style="left:1513px;top:602px;width:1px;height:36px;background:#dcdcdc"></div>
<div class="t hd" style="left:15px;top:608px;font-size:15px;line-height:24px;color:#000;-webkit-text-stroke-width:0.6px">合计</div>
<div class="t" style="font-weight:bold;-webkit-text-stroke-width:0;right:416px;top:609px;font-size:15px;line-height:24px;color:#f00">41773.5</div>
<div class="t" style="font-weight:bold;-webkit-text-stroke-width:0;right:328px;top:609px;font-size:15px;line-height:24px;color:#f00">41773.5</div>
<svg class="ab" style="left:1541px;top:363px" width="42" height="51" viewBox="0 0 42 51">
<path d="M1.8 23.2 L23 2.2 Q25 0.6 25 3.2 V47.8 Q25 50.4 23 48.8 L1.8 27.8 Q0 25.5 1.8 23.2 Z" fill="#1890d8"/>
<rect x="29" y="1" width="14" height="49" rx="3" fill="#1890d8"/></svg>
<div class="t hd" style="left:1111px;top:662px;font-size:15px;line-height:24px;color:#333">当前显示 共<b style="-webkit-text-stroke-width:0">14</b>个单据 共<b style="-webkit-text-stroke-width:0">17</b>条记录</div>
<div class="ab" style="left:1343px;top:658px;width:35px;height:35px;border:1px solid #dcdcdc;background:#fff"></div>
<svg class="ab" style="left:1356px;top:669px" width="9" height="14" viewBox="0 0 9 14"><path d="M7.4 1 L1.4 7 L7.4 13" fill="none" stroke="#bbb" stroke-width="1.2"/></svg>
<div class="ab" style="left:1388px;top:658px;width:35px;height:35px;border:1px solid #1890ff;background:#fff"></div>
<div class="t" style="left:1401px;top:663px;font-size:15px;line-height:24px;color:#4a8ef0">1</div>
<div class="ab" style="left:1433px;top:658px;width:35px;height:35px;border:1px solid #dcdcdc;background:#fff"></div>
<svg class="ab" style="left:1446px;top:669px" width="9" height="14" viewBox="0 0 9 14"><path d="M1.6 1 L7.6 7 L1.6 13" fill="none" stroke="#bbb" stroke-width="1.2"/></svg>
<div class="ab" style="left:1488px;top:658px;width:100px;height:35px;border:1px solid #dcdcdc;background:#fff"></div>
<div class="t" style="left:1498.5px;top:663px;font-size:15px;line-height:24px;color:#222">20</div>
<div class="ab" style="left:1510px;top:657px;width:90px;height:39px;border-radius:7px;background:#f3f3f3;box-shadow:0 0 3px rgba(0,0,0,0.18)"></div>
<div class="t" style="left:1521px;top:664px;font-size:15px;line-height:24px;color:#111">显示桌面</div>
</body></html>
